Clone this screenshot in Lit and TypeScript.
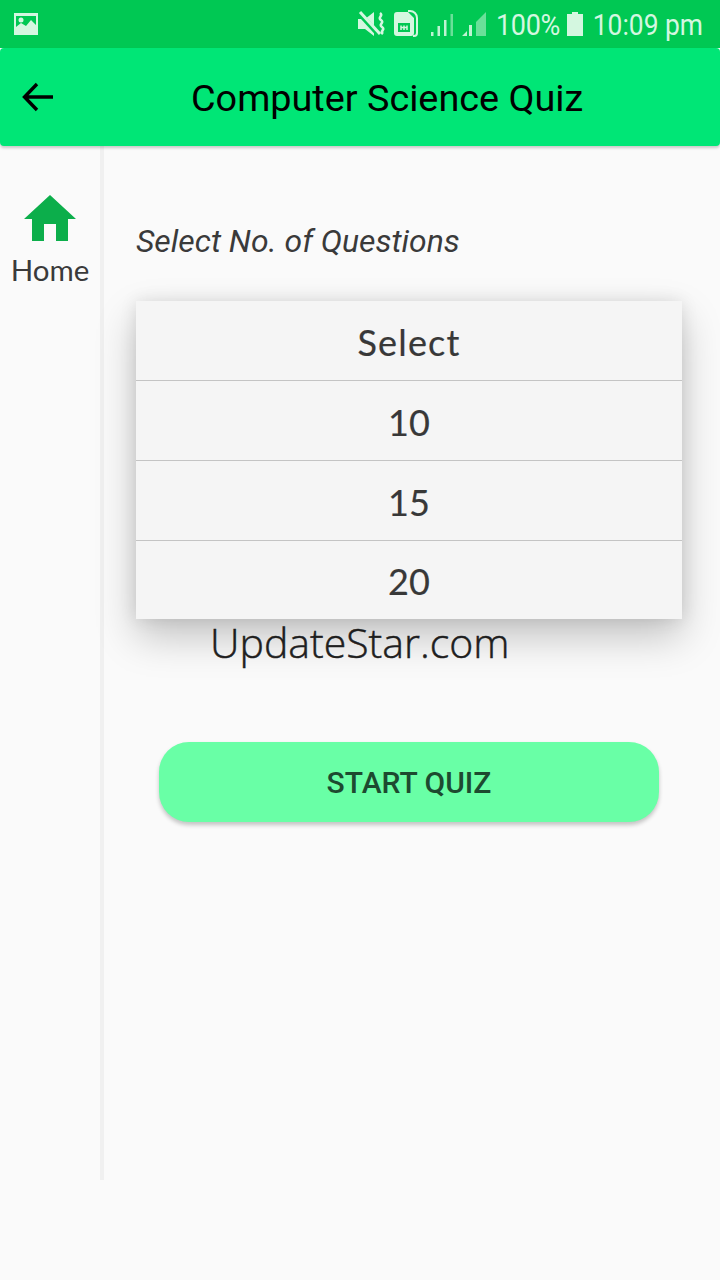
import { LitElement, html, css, svg } from 'lit';
import { customElement } from 'lit/decorators.js';

const options = ['Select', '10', '15', '20'];

@customElement('app-root')
export class AppRoot extends LitElement {
  static override styles = css`
    :host {
      display: block;
      width: 720px;
      height: 1280px;
      background: #fafafa;
      font-family: Roboto, sans-serif;
      overflow: hidden;
    }
    .status {
      height: 48px;
      background: #00c853;
      color: #d4f7e0;
      display: flex;
      align-items: center;
      padding: 0 17px 0 14px;
      font-size: 30px;
      box-sizing: border-box;
    }
    .status .spacer {
      flex: 1;
    }
    .status svg {
      display: block;
    }
    .status-right {
      display: flex;
      align-items: center;
    }
    .pct {
      margin-left: 9px;
      letter-spacing: -0.4px;
      transform: scaleX(0.9);
      transform-origin: left center;
      width: 71px;
    }
    .time {
      margin-left: 9px;
      transform: scaleX(0.88);
      transform-origin: right center;
      width: 111px;
      white-space: nowrap;
      display: flex;
      justify-content: flex-end;
    }
    .appbar {
      height: 98px;
      background: #00e676;
      border-radius: 4px;
      display: flex;
      align-items: center;
      padding-left: 22px;
      box-shadow: 0 2px 3px rgba(0, 0, 0, 0.2);
      position: relative;
    }
    .title {
      font-size: 37.8px;
      color: #000;
      margin-left: 137px;
      padding-top: 2px;
      white-space: nowrap;
    }
    .body {
      display: flex;
      height: 1034px;
    }
    .rail {
      width: 104px;
      height: 100%;
      border-right: 4px solid #f0f0f0;
      display: flex;
      flex-direction: column;
      align-items: center;
      padding-top: 49px;
      box-sizing: border-box;
      flex: none;
    }
    .rail svg {
      display: block;
    }
    .rail-label {
      font-family: Lato, sans-serif;
      font-size: 29.5px;
      color: #3a3a3a;
      margin-top: 12px;
      line-height: 34px;
    }
    .main {
      flex: 1;
      position: relative;
      padding: 75px 0 0 32px;
    }
    .prompt {
      font-style: italic;
      font-size: 31.9px;
      line-height: 40px;
      color: #3a3a3a;
      height: 40px;
    }
    .watermark {
      font-family: 'Open Sans', sans-serif;
      font-size: 41px;
      line-height: 52px;
      color: #222;
      margin: 355px 0 0 74px;
      font-weight: 300;
      -webkit-text-stroke: 0.45px #222;
    }
    .start {
      display: flex;
      align-items: center;
      justify-content: center;
      width: 500px;
      height: 80px;
      margin: 74px 0 0 23px;
      background: #69ffa6;
      border-radius: 30px;
      box-shadow: 0 3px 4px rgba(0, 0, 0, 0.22);
      color: #1d4a30;
      font-size: 30px;
      font-weight: 500;
    }
    .menu {
      position: absolute;
      left: 32px;
      top: 155px;
      width: 546px;
      background: #f5f5f5;
      box-shadow: 0 18px 38px rgba(0, 0, 0, 0.22), 0 0 16px rgba(0, 0, 0, 0.1);
    }
    .item {
      height: 77px;
      padding-top: 2px;
      border-bottom: 1px solid #c4c4c4;
      display: flex;
      align-items: center;
      justify-content: center;
      font-family: Lato, sans-serif;
      font-size: 36px;
      color: #383838;
      -webkit-text-stroke: 0.2px #383838;
    }
    .item:first-child {
      letter-spacing: 1.2px;
    }
    .item:last-child {
      border-bottom: none;
      height: 76px;
    }
  `;

  private statusIcons() {
    return html`
      <svg width="30" height="26" viewBox="0 0 30 26">
        <path d="M1 8h7l9-7v24l-9-7H1z" fill="currentColor" />
        <path d="M2 2l20 22" stroke="#00c853" stroke-width="5" />
        <path d="M3 1l20 22" stroke="currentColor" stroke-width="3" />
        <path d="M22 2c4 3-3 4 1 7s-3 4 1 7-3 4 1 7" transform="translate(1 0)" fill="none" stroke="currentColor" stroke-width="2.6" />
      </svg>
      <svg width="24" height="30" viewBox="0 0 24 30" style="margin-left:7px">
        <path d="M14 2h2a7 7 0 0 1 7 7v15a3 3 0 0 1-3 3h-1" fill="none" stroke="currentColor" stroke-width="2" />
        <path fill-rule="evenodd" d="M3 3h11l6 6v15a3 3 0 0 1-3 3H3a3 3 0 0 1-3-3V6a3 3 0 0 1 3-3zM4 14v9h12v-9z" fill="currentColor" />
        <path d="M7 16.500v4.500M10 16.500v4.500M13 16.500v4.500M7 18.500h6" stroke="currentColor" stroke-width="1.5" />
      </svg>
      <svg width="56" height="28" viewBox="0 0 56 28" style="margin-left:13px">
        ${[0, 1, 2, 3].map(
          (i) => svg`<rect x=${i * 6.5} y=${22 - i * 6} width="2.5" height=${4 + i * 6} fill="currentColor" opacity=${i === 3 ? 0.5 : 0.9} />`
        )}
        <path d="M31 26h5v-5zM38 26h3V15h-3z" fill="currentColor" opacity="0.9" />
        <path d="M45 26h10V2l-10 10z" fill="currentColor" opacity="0.5" />
      </svg>
    `;
  }

  override render() {
    return html`
      <div class="status">
        <svg width="24" height="22" viewBox="0 0 24 22">
          <path fill-rule="evenodd" d="M0 0h24v22H0zM2 3v11l5-4 5 3 5-6 5 5V3z" fill="currentColor" />
          <circle cx="7" cy="7" r="2.5" fill="currentColor" />
        </svg>
        <span class="spacer"></span>
        <div class="status-right">
          ${this.statusIcons()}
          <span class="pct">100%</span>
          <svg width="16" height="24" viewBox="0 0 16 24">
            <path d="M5 0h6v2h5v22H0V2h5z" fill="currentColor" />
          </svg>
          <span class="time">10:09 pm</span>
        </div>
      </div>
      <div class="appbar">
        <svg width="32" height="32" viewBox="0 0 32 32">
          <path d="M31 16H3M15 3L2.5 16 15 29" fill="none" stroke="#000" stroke-width="3.4" />
        </svg>
        <span class="title">Computer Science Quiz</span>
      </div>
      <div class="body">
        <div class="rail">
          <svg width="54" height="46" viewBox="0 0 54 46">
            <path fill-rule="evenodd" d="M27 0l26 24h-8v22H33V29H21v17H9V24H1z" fill="#0cae4b" />
          </svg>
          <div class="rail-label">Home</div>
        </div>
        <div class="main">
          <div class="prompt">Select No. of Questions</div>
          <div class="watermark">UpdateStar.com</div>
          <div class="start">START QUIZ</div>
          <div class="menu">
            ${options.map((o) => html`<div class="item">${o}</div>`)}
          </div>
        </div>
      </div>
    `;
  }
}
